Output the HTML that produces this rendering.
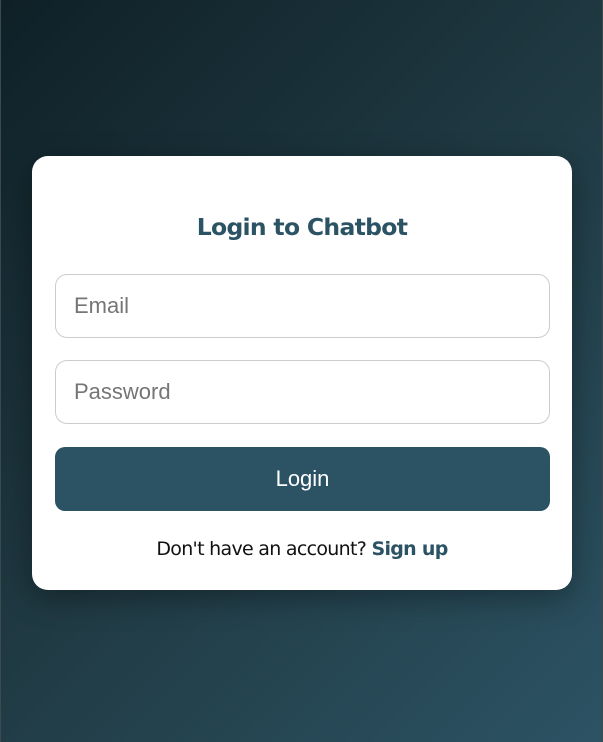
<!DOCTYPE html>
<html><head><meta charset="utf-8"><style>
html,body{margin:0;padding:0;width:603px;height:742px;overflow:hidden}
body{background:linear-gradient(135deg,#0f2027 0%,#203a43 50%,#2c5364 100%);font-family:"Liberation Sans",sans-serif;position:relative;box-sizing:border-box;border-left:1px solid #3a4a50;border-right:1px solid #3a4a50}
.card{position:absolute;left:31px;top:156px;width:540px;height:434px;background:#fff;border-radius:16px;box-shadow:0 8px 30px rgba(0,0,0,0.35)}
h1{margin:0;position:absolute;top:57px;left:0;width:100%;text-align:center;font-size:23.5px;font-weight:bold;color:#2c5364;font-family:"DejaVu Sans","Liberation Sans",sans-serif;letter-spacing:-0.7px}
.in{position:absolute;left:23px;width:495px;height:64px;box-sizing:border-box;border:1px solid #ccc;border-radius:12px;padding-left:18px;font-size:22px;color:#757575;line-height:62px}
.btn{position:absolute;left:23px;top:291px;width:495px;height:64px;background:#2c5364;border-radius:10px;color:#fff;font-size:22px;text-align:center;line-height:64px}
.f{position:absolute;top:382px;left:0;width:100%;text-align:center;font-size:19px;color:#111;font-family:"DejaVu Sans","Liberation Sans",sans-serif;letter-spacing:-0.7px}
.f b{color:#2c5364;font-weight:600}
</style></head><body>
<div class="card">
<h1>Login to Chatbot</h1>
<div class="in" style="top:118px">Email</div>
<div class="in" style="top:204px">Password</div>
<div class="btn">Login</div>
<div class="f">Don't have an account? <b>Sign up</b></div>
</div>
</body></html>
